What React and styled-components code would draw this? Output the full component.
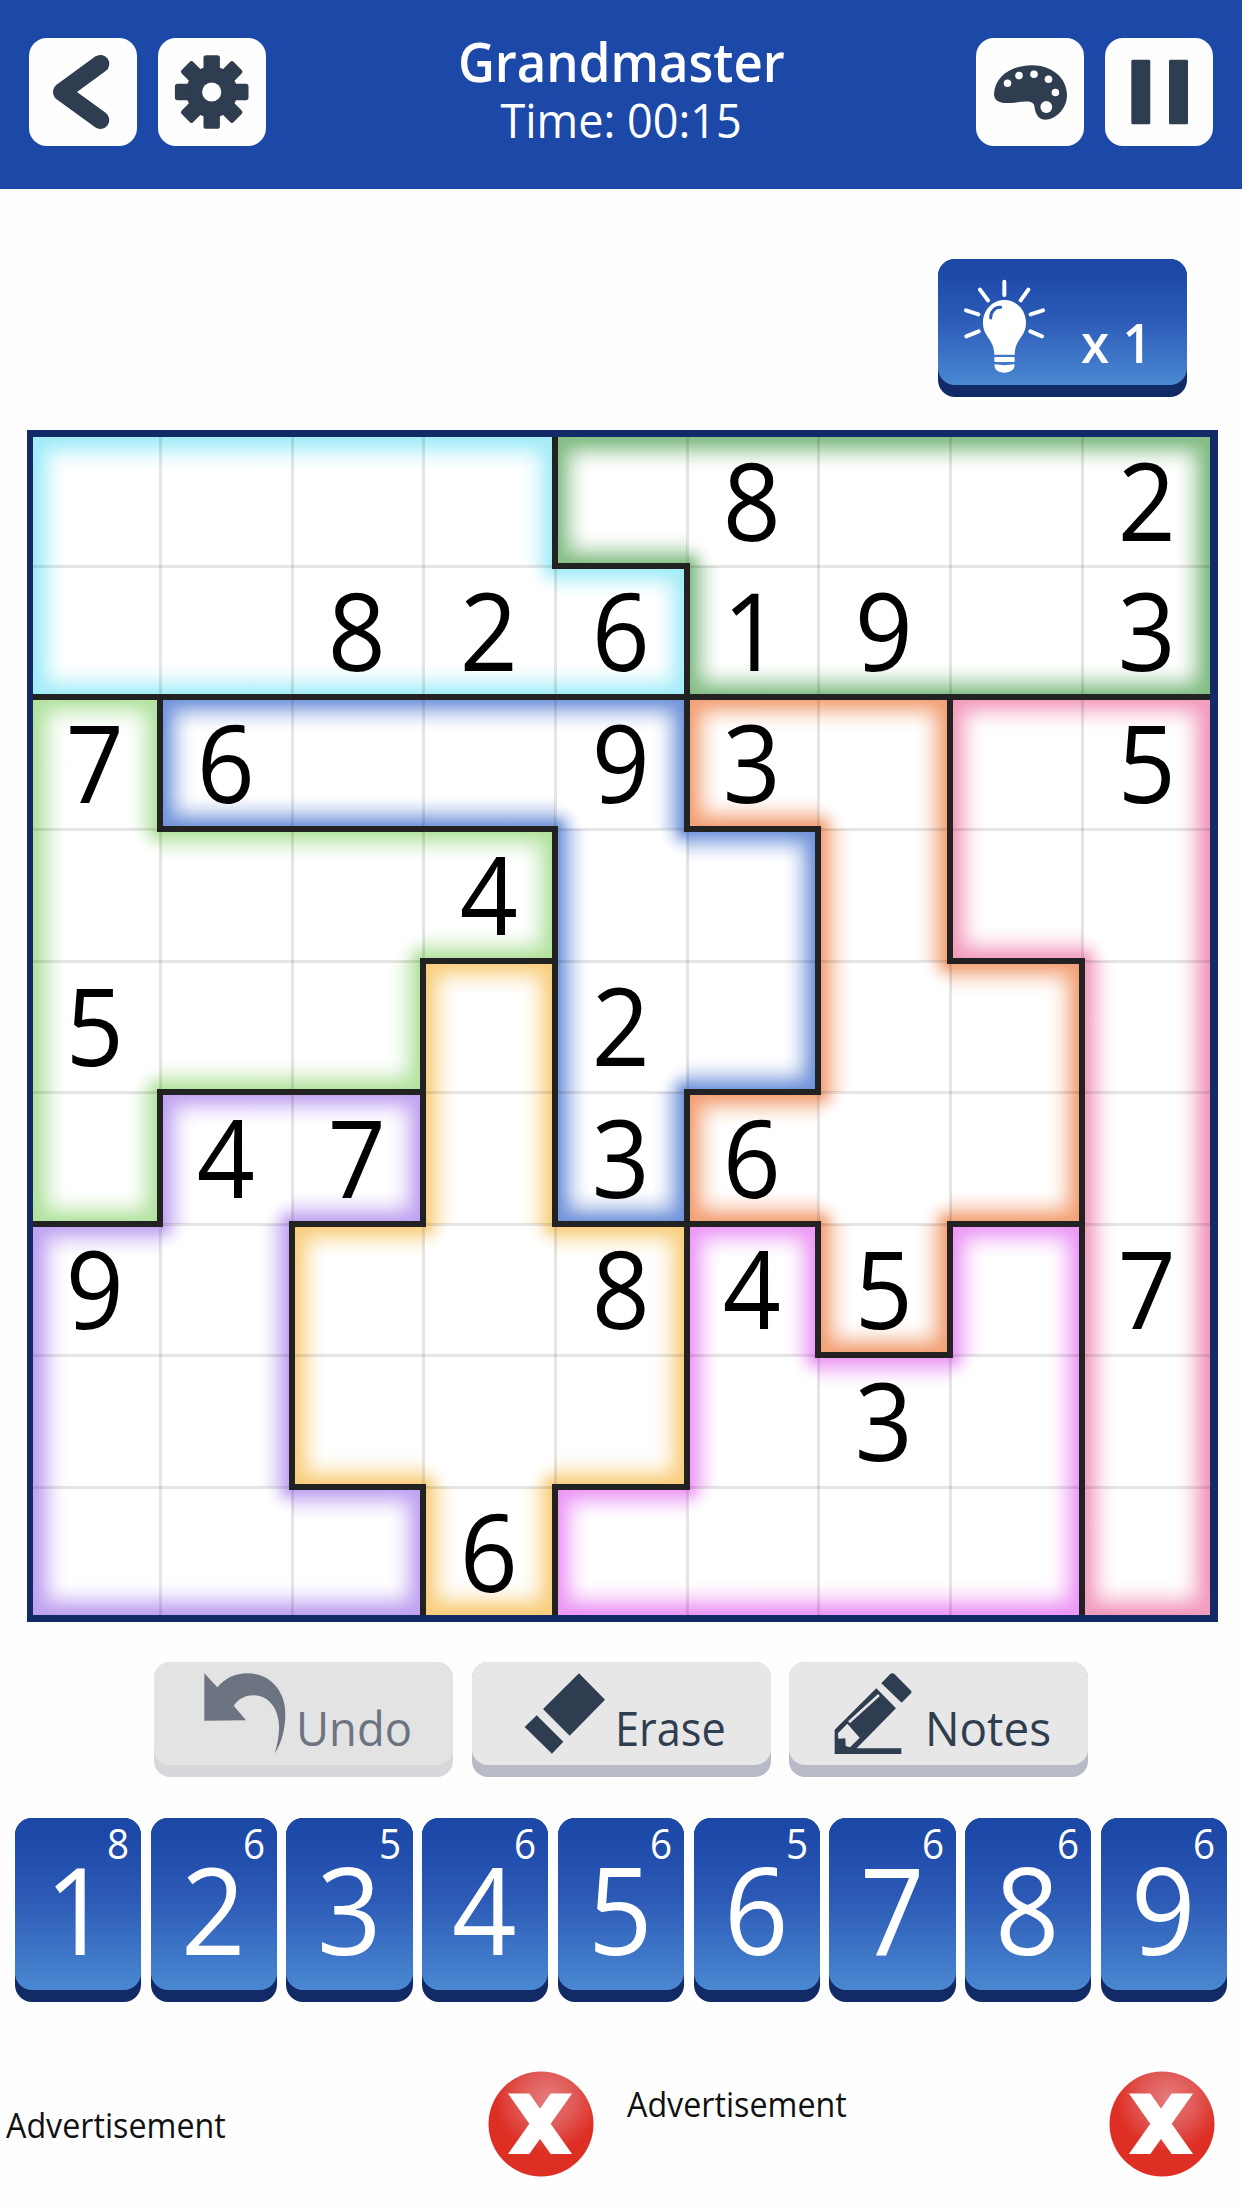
import React from "react";
import styled, { createGlobalStyle, css } from "styled-components";

const NAVY = "#122a66";
const BLUE = "#1c48a8";
const SLATE = "#2f3d50";
const FONT = '"Open Sans", "Noto Sans", sans-serif';

const GlobalStyle = createGlobalStyle`
  *, *::before, *::after { box-sizing: border-box; }
  body { margin: 0; background: #fff; }
`;

const Screen = styled.div`
  width: 1242px;
  height: 2208px;
  overflow: hidden;
  display: flex;
  flex-direction: column;
  background: #fefefe;
  font-family: ${FONT};
`;

/* ---------- header ---------- */

const Header = styled.header`
  height: 188.5px;
  flex: none;
  padding: 38px 29px 0 29px;
  display: flex;
  justify-content: space-between;
  align-items: flex-start;
  background: ${BLUE};
`;

const ButtonPair = styled.div`
  display: flex;
  gap: 21px;
`;

const IconButton = styled.button`
  width: 108px;
  height: 108px;
  padding: 0;
  border: 0;
  border-radius: 18px;
  background: #fefefe;
  color: ${SLATE};
  svg { display: block; }
`;

const TitleBlock = styled.div`
  display: flex;
  flex-direction: column;
  align-items: center;
  color: #fff;
  white-space: nowrap;
`;

const Title = styled.h1`
  margin: -8px 0 0;
  font-size: 54px;
  line-height: 62px;
  font-weight: 600;
  transform: scaleX(0.943);
`;

const Timer = styled.div`
  font-size: 47px;
  line-height: 56px;
  transform: scaleX(0.957);
`;

/* ---------- hint ---------- */

const HintRow = styled.div`
  flex: none;
  height: 241.5px;
  padding: 70px 55px 0;
  display: flex;
  justify-content: flex-end;
  align-items: flex-start;
`;

const HintButton = styled.button`
  width: 249px;
  height: 138px;
  padding: 0 0 11.5px;
  border: 0;
  border-radius: 17px;
  background: ${NAVY};
  font-family: inherit;
`;

const HintFace = styled.span`
  width: 100%;
  height: 100%;
  padding: 20px 0 0 25px;
  display: flex;
  align-items: flex-start;
  border-radius: 17px;
  background: linear-gradient(${BLUE} 10%, #2d5db8 50%, #4a88d2);
  color: #fff;
`;

const HintCount = styled.span`
  margin: 33px 0 0 34px;
  font-size: 54px;
  line-height: 60px;
  font-weight: 600;
  transform: scaleX(0.95);
  transform-origin: left;
`;

/* ---------- board ---------- */

const Board = styled.main`
  flex: none;
  width: 1191px;
  height: 1192px;
  margin-left: 27px;
  border: solid ${NAVY};
  border-width: 7px 8px 7px 6px;
  display: grid;
  grid-template-columns: 127px 132px 131px 132px 132px 131px 132px 132px 128px;
  grid-template-rows: 129px 131px 132px 132px 131px 132px 131px 132px 128px;
  background: #fff;
`;

const GLOW = 35;
const CORNER_GLOW = 28;
const STOPS = [
  [0, "ff"],
  [0.12, "e8"],
  [0.27, "b2"],
  [0.43, "74"],
  [0.6, "3c"],
  [0.8, "13"],
  [1, "00"],
];
const fade = (color, reach) =>
  STOPS.map(([at, alpha]) => `${color}${alpha} ${(at * reach).toFixed(1)}px`).join(", ");
const solid = (color) => `linear-gradient(${color}, ${color})`;

const EDGE = {
  top: ["to bottom", (n) => `0 0 / 100% ${n}px`],
  bottom: ["to top", (n) => `0 100% / 100% ${n}px`],
  left: ["to right", (n) => `0 0 / ${n}px 100%`],
  right: ["to left", (n) => `100% 0 / ${n}px 100%`],
};

function paintCell({ $color, $walls, $rims, $inner, $corners }) {
  const layers = [];
  $corners.forEach(([y, x]) => layers.push(`${solid("#222")} ${x} ${y} / 3px 3px`));
  $walls.forEach((side) => layers.push(`${solid("#222")} ${EDGE[side][1](3)}`));
  $inner.forEach((side) => {
    const n = side === "left" || side === "top" ? 2 : 1;
    layers.push(`${solid("rgba(0,0,0,0.1)")} ${EDGE[side][1](n)}`);
  });
  [...$walls, ...$rims].forEach((side) => {
    layers.push(`linear-gradient(${EDGE[side][0]}, ${fade($color, GLOW)}) ${EDGE[side][1](GLOW)}`);
  });
  $corners.forEach(([y, x]) => {
    layers.push(
      `radial-gradient(circle at ${x} ${y}, ${fade($color, CORNER_GLOW)}) ${x} ${y} / ${GLOW}px ${GLOW}px`
    );
  });
  if (!layers.length) return "";
  return css`
    background: ${layers.map((l) => `${l} no-repeat`).join(", ")};
  `;
}

const Cell = styled.div`
  display: flex;
  align-items: center;
  justify-content: center;
  padding: 0 ${(p) => (p.$col === 0 ? 4 : 1)}px ${(p) => (p.$row === 8 ? 0 : 3)}px ${(p) => (p.$col === 8 ? 3 : 0)}px;
  ${paintCell}
`;

const CellDigit = styled.span`
  font-size: 108px;
  line-height: 1;
  color: #000;
  transform: scaleX(0.94);
`;

const COLORS = {
  A: "#a2ecf8",
  B: "#84bd86",
  C: "#b2e29f",
  D: "#7093da",
  E: "#f2a074",
  P: "#f29bbd",
  Y: "#f8ce7c",
  V: "#bfa2f1",
  M: "#ec97f5",
};

const REGIONS = [
  "AAAABBBBB",
  "AAAAABBBB",
  "CDDDDEEPP",
  "CCCCDDEPP",
  "CCCYDDEEP",
  "CVVYDEEEP",
  "VVYYYMEMP",
  "VVYYYMMMP",
  "VVVYMMMMP",
];

const GIVENS = [
  ".....8..2",
  "..82619.3",
  "76..93..5",
  "...4.....",
  "5...2....",
  ".47.36...",
  "9...845.7",
  "......3..",
  "...6.....",
];

const STEPS = { top: [-1, 0], bottom: [1, 0], left: [0, -1], right: [0, 1] };
const regionAt = (r, c) => (REGIONS[r] ? REGIONS[r][c] : undefined);

const CELLS = REGIONS.flatMap((line, r) =>
  [...line].map((region, c) => {
    const cell = { r, c, region, walls: [], rims: [], inner: [], corners: [] };
    Object.entries(STEPS).forEach(([side, [dr, dc]]) => {
      const other = regionAt(r + dr, c + dc);
      if (other === undefined) cell.rims.push(side);
      else if (other === region) cell.inner.push(side);
      else cell.walls.push(side);
    });
    ["top", "bottom"].forEach((y) =>
      ["left", "right"].forEach((x) => {
        if (
          cell.inner.includes(y) &&
          cell.inner.includes(x) &&
          regionAt(r + STEPS[y][0], c + STEPS[x][1]) !== region
        ) {
          cell.corners.push([y, x]);
        }
      })
    );
    return cell;
  })
);

/* ---------- tools ---------- */

const Tools = styled.div`
  flex: none;
  margin-top: 40px;
  display: flex;
  justify-content: center;
  gap: 18.4px;
`;

const ToolButton = styled.button`
  width: 299px;
  height: 115px;
  padding: 0 0 12.5px;
  border: 0;
  border-radius: 16px;
  background: ${(p) => (p.$off ? "#d7d8db" : "#b8bbc7")};
  color: ${(p) => (p.$off ? "#6b7480" : SLATE)};
  font-family: inherit;
`;

const ToolFace = styled.span`
  width: 100%;
  height: 100%;
  padding: 10.5px 0 0 ${(p) => p.$indent}px;
  display: flex;
  align-items: flex-start;
  border-radius: 16px;
  background: ${(p) => (p.$off ? "#e3e3e3" : "#e7e7e7")};
`;

const ToolLabel = styled.span`
  margin: 25px 0 0 ${(p) => p.$gap}px;
  font-size: 47.5px;
  line-height: 60px;
  transform: scaleX(${(p) => p.$squeeze});
  transform-origin: left;
`;

/* ---------- number pad ---------- */

const Pad = styled.div`
  flex: none;
  margin-top: 41px;
  padding: 0 15px;
  display: grid;
  grid-template-columns: repeat(9, 1fr);
  gap: 9.6px;
`;

const Key = styled.button`
  height: 184px;
  padding: 0 0 12.5px;
  border: 0;
  border-radius: 17px;
  background: ${NAVY};
  font-family: inherit;
`;

const KeyFace = styled.span`
  height: 100%;
  display: flex;
  flex-direction: column;
  align-items: center;
  border-radius: 17px;
  background: linear-gradient(${BLUE} 8%, #2b59b5 45%, #4a88d2);
  color: #fff;
`;

const Remaining = styled.span`
  align-self: flex-end;
  margin: 1px 11px 0 0;
  font-size: 42px;
  line-height: 48px;
  transform: scaleX(0.92);
`;

const KeyDigit = styled.span`
  margin: 2px 1px 0 0;
  font-size: 120px;
  line-height: 80px;
  transform: scaleX(0.94);
`;

const REMAINING = [8, 6, 5, 6, 6, 5, 6, 6, 6];

/* ---------- advertisement strip ---------- */

const AdStrip = styled.footer`
  flex: 1;
  display: grid;
  grid-template-columns: 621px 621px;
`;

const AdSlot = styled.section`
  padding: 69px 27px 0 6px;
  display: flex;
  justify-content: space-between;
  align-items: flex-start;
`;

const AdLabel = styled.span`
  margin-top: ${(p) => p.$drop}px;
  font-size: 34px;
  line-height: 40px;
  color: #111;
  transform: scaleX(0.948);
  transform-origin: left;
`;

/* ---------- icons ---------- */

const BackIcon = () => (
  <svg width="108" height="108" viewBox="29 38 108 108" aria-hidden="true">
    <path d="M100.4 63.8 61.8 92l38.6 28" fill="none" stroke="currentColor" strokeWidth="17.8" strokeLinecap="round" strokeLinejoin="round" />
  </svg>
);

const GearIcon = () => (
  <svg width="108" height="108" viewBox="-53.7 -54 108 108" aria-hidden="true" fill="currentColor">
    {[0, 45, 90, 135].map((a) => (
      <rect key={a} x="-8.2" y="-36.8" width="16.4" height="73.6" rx="2.6" transform={`rotate(${a})`} />
    ))}
    <circle r="25.6" />
    <circle r="9.6" fill="#fefefe" />
  </svg>
);

const PaletteIcon = () => (
  <svg width="108" height="108" viewBox="976 38 108 108" aria-hidden="true">
    <path
      fill="currentColor"
      d="M994 94C995 76 1012 65.2 1032 65.2c20 0 35 12.8 35 29.8 0 15-13 25-22 24.7-8-.5-10-8-10.5-13.2-.5-3.5-3-5-8-5-7 0-15 2-22 1.5-7-.6-10.5-4-10.5-9z"
    />
    <g fill="#fefefe">
      <circle cx="1007.5" cy="83.2" r="3.8" />
      <circle cx="1019" cy="75.6" r="3.8" />
      <circle cx="1034" cy="74.2" r="3.8" />
      <circle cx="1048.5" cy="79.2" r="3.8" />
      <circle cx="1055.4" cy="92.5" r="3.8" />
      <circle cx="1046.3" cy="107" r="5.9" />
    </g>
  </svg>
);

const PauseIcon = () => (
  <svg width="108" height="108" viewBox="1105 38 108 108" aria-hidden="true" fill="currentColor">
    <rect x="1131.3" y="59.8" width="19" height="64.4" rx="1.5" />
    <rect x="1169" y="59.8" width="19" height="64.4" rx="1.5" />
  </svg>
);

const BulbIcon = () => (
  <svg width="84" height="97" viewBox="190 118 252 291" aria-hidden="true">
    <path fill="#fff" d="M250 250c0-39 28-69 64-69s65 30 65 69c0 42-34 48-34 95h-61c0-47-34-53-34-95z" />
    <rect x="284" y="352" width="61" height="15" rx="3" fill="#fff" />
    <path fill="#fff" d="M285 374q30 5 59 0c3 17-14 25-30 25s-32-8-29-25z" />
    <path d="M273 235c-1-19 14-33 30-32" fill="none" stroke="#2c5ab5" strokeWidth="9" strokeLinecap="round" />
    <path
      d="M314 126v40M241 150l24 32M386 150l-23 32M199 212l37 12M430 212l-37 12M200 290l37-15M427 290l-35-15"
      fill="none"
      stroke="#fff"
      strokeWidth="12"
      strokeLinecap="round"
    />
  </svg>
);

const UndoIcon = () => (
  <svg width="82" height="82" viewBox="192 95 246 246" aria-hidden="true">
    <path
      fill="currentColor"
      d="M193 96l39 42c24-28 53-42 91-42 66 0 113 53 113 120 0 48-11 88-32 121 12-39 17-79 10-107-8-40-35-68-73-68-24 0-43 9-60 31l37 44-125 1z"
    />
  </svg>
);

const EraserIcon = () => (
  <svg width="82" height="82" viewBox="1151 95 246 246" aria-hidden="true" fill="currentColor">
    <path d="M1316 96l78 79-106 108-80-80zM1189 222l80 79-34 36-82-80z" />
  </svg>
);

const PencilIcon = () => (
  <svg width="82" height="82" viewBox="643 95 246 246" aria-hidden="true">
    <path fill="currentColor" d="M785 126l26-27q7-6 14 0l49 49q3 4 0 8l-28 28z" />
    <path fill="currentColor" d="M770 141l59 60-118 120h134v17H645v-73z" />
    <path fill="#e7e7e7" d="M683 247l37 42-29 29-13-4-1-23-21 1-1-16z" />
    <path d="M688 243l90-82" stroke="#e7e7e7" strokeWidth="8" />
  </svg>
);

const CloseIcon = ({ id }) => (
  <svg width="106" height="106" viewBox="0 0 106 106" role="img" aria-label="Close">
    <defs>
      <radialGradient id={id} cx="56%" cy="26%" r="50%">
        <stop offset="0" stopColor="#e47c7c" />
        <stop offset="0.55" stopColor="#e05753" />
        <stop offset="1" stopColor="#de2f24" />
      </radialGradient>
      <clipPath id={`${id}-clip`}>
        <rect x="12" y="22.5" width="80" height="60.5" />
      </clipPath>
    </defs>
    <circle cx="53" cy="53" r="52.5" fill={`url(#${id})`} />
    <g clipPath={`url(#${id}-clip)`} stroke="#fff" strokeWidth="17.5">
      <path d="M25 14.5 79 91M79 14.5 25 91" />
    </g>
  </svg>
);

export default function App() {
  return (
    <Screen>
      <GlobalStyle />
      <Header>
        <ButtonPair>
          <IconButton aria-label="Back"><BackIcon /></IconButton>
          <IconButton aria-label="Settings"><GearIcon /></IconButton>
        </ButtonPair>
        <TitleBlock>
          <Title>Grandmaster</Title>
          <Timer>Time: 00:15</Timer>
        </TitleBlock>
        <ButtonPair>
          <IconButton aria-label="Theme"><PaletteIcon /></IconButton>
          <IconButton aria-label="Pause"><PauseIcon /></IconButton>
        </ButtonPair>
      </Header>

      <HintRow>
        <HintButton>
          <HintFace>
            <BulbIcon />
            <HintCount>x 1</HintCount>
          </HintFace>
        </HintButton>
      </HintRow>

      <Board>
        {CELLS.map(({ r, c, region, walls, rims, inner, corners }) => (
          <Cell
            key={`${r}-${c}`}
            $row={r}
            $col={c}
            $color={COLORS[region]}
            $walls={walls}
            $rims={rims}
            $inner={inner}
            $corners={corners}
          >
            {GIVENS[r][c] === "." ? null : <CellDigit>{GIVENS[r][c]}</CellDigit>}
          </Cell>
        ))}
      </Board>

      <Tools>
        <ToolButton $off disabled>
          <ToolFace $off $indent={50}>
            <UndoIcon />
            <ToolLabel $gap={9.5} $squeeze={0.955}>Undo</ToolLabel>
          </ToolFace>
        </ToolButton>
        <ToolButton>
          <ToolFace $indent={52.5}>
            <EraserIcon />
            <ToolLabel $gap={9} $squeeze={0.912}>Erase</ToolLabel>
          </ToolFace>
        </ToolButton>
        <ToolButton>
          <ToolFace $indent={45.5}>
            <PencilIcon />
            <ToolLabel $gap={8.5} $squeeze={0.965}>Notes</ToolLabel>
          </ToolFace>
        </ToolButton>
      </Tools>

      <Pad>
        {REMAINING.map((left, i) => (
          <Key key={i}>
            <KeyFace>
              <Remaining>{left}</Remaining>
              <KeyDigit>{i + 1}</KeyDigit>
            </KeyFace>
          </Key>
        ))}
      </Pad>

      <AdStrip>
        <AdSlot>
          <AdLabel $drop={34}>Advertisement</AdLabel>
          <CloseIcon id="close-left" />
        </AdSlot>
        <AdSlot>
          <AdLabel $drop={13}>Advertisement</AdLabel>
          <CloseIcon id="close-right" />
        </AdSlot>
      </AdStrip>
    </Screen>
  );
}
